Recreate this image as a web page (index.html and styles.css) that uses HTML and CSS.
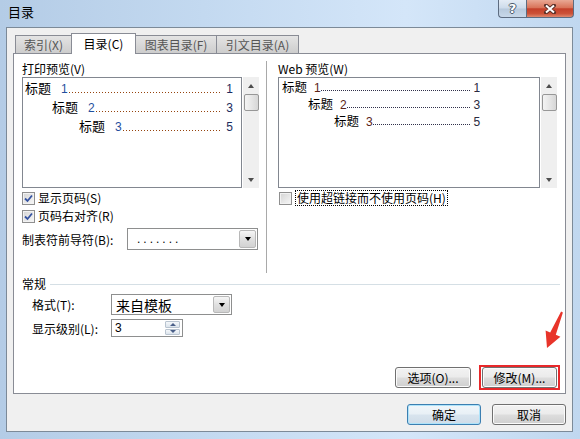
FILE: index.html
```html
<!DOCTYPE html>
<html lang="zh-CN">
<head>
    <meta charset="UTF-8">
    <title>目录</title>
    <link rel="stylesheet" href="styles.css">
</head>
<body>
<div class="window">
    <div class="titlebar">
        <div class="title">目录</div>
        <div class="caption-buttons">
            <div class="cap-btn cap-help">?</div>
            <div class="cap-btn cap-close">
                <svg width="14" height="10" viewBox="0 0 14 10">
                    <path d="M3 1.5 L11 8.5 M11 1.5 L3 8.5" stroke="#5a3028" stroke-width="4" stroke-linecap="round"/>
                    <path d="M3 1.5 L11 8.5 M11 1.5 L3 8.5" stroke="#fff" stroke-width="2"/>
                </svg>
            </div>
        </div>
    </div>

    <div class="client">
        <div class="tabs">
            <div class="tab tab-index">索引(X)</div>
            <div class="tab tab-toc active">目录(C)</div>
            <div class="tab tab-fig">图表目录(F)</div>
            <div class="tab tab-cite">引文目录(A)</div>
        </div>

        <div class="panel">
            <div class="columns">
                <div class="col-left">
                    <div class="field-label">打印预览(V)</div>
                    <div class="preview">
                        <div class="listbox print">
                            <div class="toc-row lvl1"><span class="toc-title">标题</span><span class="toc-num">1</span><span class="leader"></span><span class="toc-page">1</span></div>
                            <div class="toc-row lvl2"><span class="toc-title">标题</span><span class="toc-num">2</span><span class="leader"></span><span class="toc-page">3</span></div>
                            <div class="toc-row lvl3"><span class="toc-title">标题</span><span class="toc-num">3</span><span class="leader"></span><span class="toc-page">5</span></div>
                        </div>
                        <div class="scrollbar">
                            <div class="sb-arrow"><span class="tri-up"></span></div>
                            <div class="sb-thumb"></div>
                            <div class="sb-track"></div>
                            <div class="sb-arrow"><span class="tri-down"></span></div>
                        </div>
                    </div>
                    <div class="check-row first">
                        <span class="checkbox"><svg width="9" height="9" viewBox="0 0 9 9"><path d="M1 4.5 L3.5 7 L8 1.5" fill="none" stroke="#3553a1" stroke-width="1.8"/></svg></span>
                        <span>显示页码(S)</span>
                    </div>
                    <div class="check-row">
                        <span class="checkbox"><svg width="9" height="9" viewBox="0 0 9 9"><path d="M1 4.5 L3.5 7 L8 1.5" fill="none" stroke="#3553a1" stroke-width="1.8"/></svg></span>
                        <span>页码右对齐(R)</span>
                    </div>
                    <div class="leader-row">
                        <span class="leader-label">制表符前导符(B):</span>
                        <div class="combo combo-leader">
                            <span class="combo-text dots">.......</span>
                            <span class="combo-btn"><span class="tri-down black"></span></span>
                        </div>
                    </div>
                </div>

                <div class="vsep"></div>

                <div class="col-right">
                    <div class="field-label">Web 预览(W)</div>
                    <div class="preview">
                        <div class="listbox web">
                            <div class="toc-row lvl1"><span class="toc-title">标题</span><span class="toc-num">1</span><span class="leader"></span><span class="toc-page">1</span></div>
                            <div class="toc-row lvl2"><span class="toc-title">标题</span><span class="toc-num">2</span><span class="leader"></span><span class="toc-page">3</span></div>
                            <div class="toc-row lvl3"><span class="toc-title">标题</span><span class="toc-num">3</span><span class="leader"></span><span class="toc-page">5</span></div>
                        </div>
                        <div class="scrollbar">
                            <div class="sb-arrow"><span class="tri-up"></span></div>
                            <div class="sb-thumb"></div>
                            <div class="sb-track"></div>
                            <div class="sb-arrow"><span class="tri-down"></span></div>
                        </div>
                    </div>
                    <div class="check-row first web-check">
                        <span class="checkbox"></span>
                        <span class="focus-label">使用超链接而不使用页码(H)</span>
                    </div>
                </div>
            </div>

            <div class="group-title">
                <span>常规</span>
                <span class="group-line"></span>
            </div>
            <div class="form-row first">
                <span class="form-label">格式(T):</span>
                <div class="combo combo-format">
                    <span class="combo-text big">来自模板</span>
                    <span class="combo-btn"><span class="tri-down black"></span></span>
                </div>
            </div>
            <div class="form-row">
                <span class="form-label">显示级别(L):</span>
                <div class="spinbox">
                    <span class="spin-text">3</span>
                    <span class="spin">
                        <span class="spin-btn"><span class="tri-up small"></span></span>
                        <span class="spin-btn"><span class="tri-down small"></span></span>
                    </span>
                </div>
            </div>

            <div class="panel-actions">
                <button class="btn">选项(O)...</button>
                <div class="highlight">
                    <button class="btn">修改(M)...</button>
                </div>
            </div>
        </div>

        <div class="dialog-actions">
            <button class="btn default">确定</button>
            <button class="btn">取消</button>
        </div>
    </div>

    <svg class="arrow" width="34" height="44" viewBox="0 0 34 44">
        <polygon points="7,40 5.6,22.5 10.2,24.4 21.1,3.6 22.9,4.4 15.8,26.8 20.4,28.7" fill="#e8342a"/>
    </svg>
</div>
</body>
</html>
```

FILE: styles.css
```css
* {
    box-sizing: border-box;
}

body {
    margin: 0;
    font-family: "Noto Sans CJK SC", "Liberation Sans", sans-serif;
    font-size: 12px;
    color: #000;
}

.window {
    position: relative;
    width: 580px;
    height: 439px;
    overflow: hidden;
    background: linear-gradient(to right, #b4cce6 0%, #c3d9f0 35%, #d4e6f9 70%, #c0d7ef 100%);
}

/* title bar */
.titlebar {
    height: 27px;
    display: flex;
    justify-content: space-between;
    align-items: flex-start;
}

.title {
    padding: 3px 0 0 8px;
    font-size: 13px;
    line-height: 17px;
}

.caption-buttons {
    display: flex;
    margin-right: 6px;
}

.cap-btn {
    height: 18px;
    display: flex;
    align-items: center;
    justify-content: center;
    border: 1px solid #5d6c80;
    border-top: none;
}

.cap-help {
    width: 28px;
    border-right: none;
    border-radius: 0 0 0 4px;
    background: linear-gradient(#e4ecf5, #cddbea 48%, #b7c9dc 52%, #c8d8e9);
    color: #fff;
    font-family: "DejaVu Sans", sans-serif;
    font-weight: bold;
    font-size: 13px;
    line-height: 16px;
    text-shadow: 1px 0 #4b5a6c, -1px 0 #4b5a6c, 0 1px #4b5a6c, 0 -1px #4b5a6c;
}

.cap-close {
    width: 48px;
    border-radius: 0 0 4px 0;
    background: linear-gradient(#e9a894, #d9745a 45%, #c4402a 52%, #cc5238 80%, #e08a70);
}

/* client area */
.client {
    margin-left: 6px;
    width: 567px;
    height: 405px;
    border: 1px solid #7c8a98;
    background: #f0f0f0;
    padding: 5px 0 0 6px;
}

.tabs {
    display: flex;
    align-items: flex-end;
    height: 20px;
    margin-left: 2px;
    position: relative;
    z-index: 1;
}

.tab {
    height: 18px;
    border: 1px solid #898c95;
    border-bottom: none;
    margin-right: -1px;
    background: linear-gradient(#e4e4e4, #cdcdcd);
    color: #555;
    display: flex;
    align-items: center;
    justify-content: center;
    line-height: 16px;
}

.tab.active {
    height: 21px;
    margin-bottom: -1px;
    background: #fff;
    color: #000;
    position: relative;
    z-index: 2;
}

.tab-index { width: 57px; }
.tab-toc { width: 65px; }
.tab-fig { width: 82px; }
.tab-cite { width: 83px; }

.panel {
    width: 553px;
    height: 341px;
    border: 1px solid #898c95;
    background: #fff;
    padding: 7px 5px 0 8px;
    display: flex;
    flex-direction: column;
}

.columns {
    display: flex;
    height: 212px;
}

.col-left {
    width: 237px;
}

.vsep {
    width: 1px;
    margin-left: 7px;
    background: #a9a9a9;
}

.col-right {
    width: 279px;
    margin-left: 11px;
}

.field-label {
    height: 16px;
    line-height: 16px;
}

.preview {
    display: flex;
    height: 111px;
}

.listbox {
    border: 1px solid #828790;
    background: #fff;
}

.listbox.print {
    width: 220px;
    padding: 0 8px 0 2px;
}

.listbox.web {
    width: 263px;
    padding: 0 59px 0 3px;
}

.toc-row {
    display: flex;
    align-items: baseline;
}

.print .toc-row {
    height: 19px;
    line-height: 19px;
    font-size: 13px;
}

.web .toc-row {
    height: 17px;
    line-height: 17px;
    font-size: 12.5px;
}

.print .lvl2 { padding-left: 27px; }
.print .lvl3 { padding-left: 54px; }
.web .lvl2 { padding-left: 26px; }
.web .lvl3 { padding-left: 52px; }

.toc-num,
.toc-page {
    font-family: "Liberation Sans", sans-serif;
    font-size: 12px;
}

.print .toc-num {
    margin-left: 10px;
    color: #1f4f9e;
}

.print .toc-page {
    margin-left: 5px;
    color: #1c2c60;
}

.web .toc-num {
    margin-left: 7px;
    color: #5a2418;
}

.web .toc-page {
    margin-left: 2px;
    color: #2a2a40;
}

.leader {
    flex: 1;
    height: 1px;
    align-self: flex-end;
    margin-bottom: 4px;
}

.print .leader {
    margin-left: 1px;
    background-image: linear-gradient(to right, #96440e 1px, transparent 1px);
    background-size: 3px 1px;
}

.web .leader {
    background-image: linear-gradient(to right, #30304a 1px, transparent 1px);
    background-size: 2px 1px;
}

/* scrollbar */
.scrollbar {
    width: 16px;
    margin-left: 1px;
    background: #efefef;
    display: flex;
    flex-direction: column;
    align-items: center;
}

.sb-arrow {
    height: 17px;
    width: 100%;
    display: flex;
    align-items: center;
    justify-content: center;
}

.sb-thumb {
    width: 15px;
    height: 17px;
    border: 1px solid #979797;
    border-radius: 2px;
    background: linear-gradient(to right, #f4f4f4, #e6e6e6 50%, #d6d6d6);
}

.sb-track {
    flex: 1;
}

.tri-up,
.tri-down {
    width: 0;
    height: 0;
    border-left: 3.5px solid transparent;
    border-right: 3.5px solid transparent;
}

.tri-up {
    border-bottom: 4px solid #4d4d4d;
}

.tri-down {
    border-top: 4px solid #4d4d4d;
}

.tri-down.black {
    border-top-color: #000;
}

.tri-up.small {
    border-width: 0 3px 3px 3px;
    border-bottom-color: #4a5f88;
}

.tri-down.small {
    border-width: 3px 3px 0 3px;
    border-top-color: #4a5f88;
}

/* checkboxes */
.check-row {
    display: flex;
    align-items: center;
    gap: 3px;
    height: 16px;
    line-height: 16px;
    margin-top: 2px;
}

.web-check {
    margin-left: 1px;
}

.checkbox {
    width: 13px;
    height: 13px;
    border: 1px solid #8f8f8f;
    background: linear-gradient(135deg, #d4d4d4, #f7f7f7);
    box-shadow: inset 0 0 0 1px #f2f2f2;
    display: flex;
    align-items: center;
    justify-content: center;
}

.focus-label {
    border: 1px dotted #000;
    padding: 0 1px;
    line-height: 14px;
}

.leader-row {
    display: flex;
    align-items: center;
    margin-top: 4px;
}

.leader-label {
    width: 105px;
}

/* combo boxes */
.combo {
    display: flex;
    border: 1px solid #8e8f8f;
    background: #fff;
}

.combo-leader {
    width: 131px;
    height: 22px;
}

.combo-format {
    width: 121px;
    height: 21px;
}

.combo-text {
    flex: 1;
    display: flex;
    align-items: center;
}

.combo-text.dots {
    padding-left: 9px;
    letter-spacing: 3px;
    font-family: "Liberation Sans", sans-serif;
}

.combo-text.big {
    padding-left: 4px;
    font-size: 14px;
}

.combo-btn {
    width: 17px;
    margin: 1px;
    border: 1px solid #b8b8b8;
    border-radius: 2px;
    background: linear-gradient(#f6f6f6, #e0e0e0 50%, #d2d2d2);
    display: flex;
    align-items: center;
    justify-content: center;
}

/* group */
.group-title {
    display: flex;
    align-items: center;
    height: 16px;
    line-height: 16px;
    margin-top: 3px;
}

.group-line {
    flex: 1;
    height: 1px;
    margin-left: 4px;
    background: #d5dfe5;
}

.form-row {
    display: flex;
    align-items: center;
    padding-left: 10px;
    margin-top: 4px;
}

.form-row.first {
    margin-top: 2px;
}

.form-label {
    width: 79px;
}

.spinbox {
    width: 72px;
    height: 18px;
    display: flex;
    border: 1px solid #8e8f8f;
    background: #fff;
}

.spin-text {
    flex: 1;
    padding-left: 3px;
    line-height: 16px;
    font-family: "Liberation Sans", sans-serif;
}

.spin {
    width: 15px;
    margin: 1px 2px 1px 0;
    display: flex;
    flex-direction: column;
    gap: 1px;
}

.spin-btn {
    flex: 1;
    border: 1px solid #b9c4d0;
    border-radius: 1px;
    background: linear-gradient(#f4f7fa, #dce4ec);
    display: flex;
    align-items: center;
    justify-content: center;
}

/* buttons */
.panel-actions {
    display: flex;
    justify-content: flex-end;
    align-items: center;
    gap: 8px;
    margin-top: auto;
    margin-bottom: 3px;
}

.btn {
    width: 76px;
    height: 21px;
    padding: 0;
    border: 1px solid #707070;
    border-radius: 3px;
    background: linear-gradient(#f2f2f2 0%, #ebebeb 48%, #dddddd 52%, #cfcfcf 100%);
    box-shadow: inset 0 0 0 1px #fbfbfb;
    font-family: "Noto Sans CJK SC", "Liberation Sans", sans-serif;
    font-size: 12px;
    line-height: 17px;
    color: #000;
}

.highlight {
    border: 2px solid #e8282a;
    padding: 0 1px;
    display: flex;
}

.highlight .btn {
    width: 75px;
}

.dialog-actions {
    display: flex;
    justify-content: flex-end;
    gap: 11px;
    margin-top: 10px;
    padding-right: 6px;
}

.dialog-actions .btn {
    width: 74px;
}

.btn.default {
    border-color: #3c7fb1;
    box-shadow: inset 0 0 0 1px #aee3fa;
    background: linear-gradient(#f0f6fa 0%, #e8f0f6 48%, #d8e4ee 52%, #cfdce8 100%);
}

/* annotation arrow */
.arrow {
    position: absolute;
    left: 540px;
    top: 308px;
}
```
